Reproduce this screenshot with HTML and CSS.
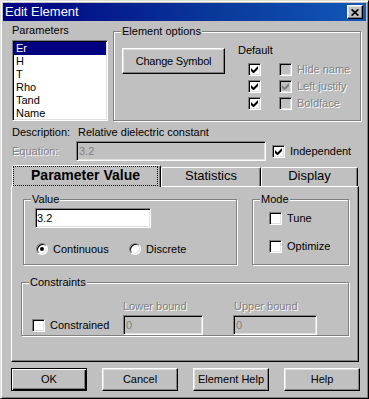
FILE: index.html
```html
<!DOCTYPE html>
<html lang="en">
<head>
<meta charset="utf-8">
<title>Edit Element</title>
<link rel="stylesheet" href="styles.css">
</head>
<body>
<svg class="defs" width="0" height="0" aria-hidden="true">
  <symbol id="chk" viewBox="0 0 7 7"><path d="M0 2 L2.5 4.5 L7 0 V3 L2.5 7.5 L0 5 Z"/></symbol>
</svg>
<div class="window">
  <div class="titlebar">
    <span class="title">Edit Element</span>
    <span class="close-btn"><svg width="8" height="7" viewBox="0 0 8 7"><path d="M0.6 0.4 L7.4 6.6 M7.4 0.4 L0.6 6.6" stroke="#000" stroke-width="1.7"/></svg></span>
  </div>
  <div class="content">
    <div class="top-row">
      <div class="params">
        <div class="lbl">Parameters</div>
        <ul class="listbox">
          <li class="sel">Er</li>
          <li>H</li>
          <li>T</li>
          <li>Rho</li>
          <li>Tand</li>
          <li>Name</li>
        </ul>
      </div>
      <div class="group options">
        <span class="legend">Element options</span>
        <button class="btn change">Change Symbol</button>
        <div class="defaults">
          <div class="default-lbl">Default</div>
          <div class="def-rows">
            <div class="def-row">
              <span class="cb"><svg class="chk" width="7" height="7"><use href="#chk"/></svg></span>
              <span class="cb dis second"></span>
              <span class="cb-lbl dis-text">Hide name</span>
            </div>
            <div class="def-row">
              <span class="cb"><svg class="chk" width="7" height="7"><use href="#chk"/></svg></span>
              <span class="cb dis second"><svg class="chk grey" width="7" height="7"><use href="#chk"/></svg></span>
              <span class="cb-lbl dis-text">Left justify</span>
            </div>
            <div class="def-row">
              <span class="cb"><svg class="chk" width="7" height="7"><use href="#chk"/></svg></span>
              <span class="cb dis second"></span>
              <span class="cb-lbl dis-text">Boldface</span>
            </div>
          </div>
        </div>
      </div>
    </div>

    <div class="desc-row">
      <span class="field-lbl">Description:</span>
      <span class="desc">Relative dielectric constant</span>
    </div>

    <div class="eq-row">
      <span class="field-lbl dis-text">Equation:</span>
      <div class="textbox dis eq">3.2</div>
      <div class="check-item indep">
        <span class="cb"><svg class="chk" width="7" height="7"><use href="#chk"/></svg></span>
        <span class="cb-lbl">Independent</span>
      </div>
    </div>

    <div class="tabs">
      <div class="tab active"><span class="focus">Parameter Value</span></div>
      <div class="tab stats">Statistics</div>
      <div class="tab display">Display</div>
    </div>

    <div class="panel">
      <div class="prow">
        <div class="group value-grp">
          <span class="legend">Value</span>
          <div class="textbox val">3.2</div>
          <div class="radio-row">
            <div class="radio-item first">
              <span class="radio"><span class="dot"></span></span>
              <span class="cb-lbl">Continuous</span>
            </div>
            <div class="radio-item">
              <span class="radio"></span>
              <span class="cb-lbl">Discrete</span>
            </div>
          </div>
        </div>
        <div class="group mode-grp">
          <span class="legend">Mode</span>
          <div class="check-item">
            <span class="cb"></span>
            <span class="cb-lbl">Tune</span>
          </div>
          <div class="check-item">
            <span class="cb"></span>
            <span class="cb-lbl">Optimize</span>
          </div>
        </div>
      </div>
      <div class="group constr-grp">
        <span class="legend">Constraints</span>
        <div class="check-item c-item">
          <span class="cb"></span>
          <span class="cb-lbl">Constrained</span>
        </div>
        <div class="bound">
          <span class="dis-text">Lower bound</span>
          <div class="textbox dis lower">0</div>
        </div>
        <div class="bound upper-col">
          <span class="dis-text bound-lbl">Upper bound</span>
          <div class="textbox dis upper">0</div>
        </div>
      </div>
    </div>

    <div class="buttons">
      <button class="btn default">OK</button>
      <button class="btn">Cancel</button>
      <button class="btn">Element Help</button>
      <button class="btn">Help</button>
    </div>
  </div>
</div>
</body>
</html>
```
FILE: styles.css
```css
* { box-sizing: border-box; }
html, body { margin: 0; padding: 0; }
body {
  background: #c0c0c0;
  font-family: "Liberation Sans", Arial, sans-serif;
  font-size: 11px;
  line-height: 13px;
  color: #000;
}
.defs { position: absolute; width: 0; height: 0; overflow: hidden; }

.window {
  width: 369px;
  height: 399px;
  background: #c0c0c0;
  border: 1px solid;
  border-color: #dfdfdf #000 #000 #dfdfdf;
  box-shadow: inset 1px 1px #fff, inset -1px -1px #808080;
  padding: 2px;
}

.titlebar {
  height: 18px;
  display: flex;
  align-items: center;
  justify-content: space-between;
  background: linear-gradient(90deg, #000080 0%, #0a3a9c 60%, #1058b8 100%);
  padding: 0 3px 0 2px;
}
.title {
  color: #fff;
  font-size: 13px;
  line-height: 18px;
}
.close-btn {
  width: 16px;
  height: 14px;
  background: #c0c0c0;
  border: 1px solid;
  border-color: #fff #000 #000 #fff;
  box-shadow: inset -1px -1px #808080, inset 1px 1px #dfdfdf;
  display: flex;
  align-items: center;
  justify-content: center;
}

.content { padding: 3px 0 0 9px; }

/* top area */
.top-row { display: flex; height: 98px; }
.params { width: 96px; flex: none; }
.lbl { height: 13px; }
.listbox {
  list-style: none;
  margin: 3px 0 0;
  padding: 1px;
  height: 81px;
  background: #fff;
  border: 1px solid;
  border-color: #808080 #fff #fff #808080;
  box-shadow: inset 1px 1px #000, inset -1px -1px #dfdfdf;
}
.listbox li { height: 13px; padding-left: 2px; }
.listbox li.sel { background: #000080; color: #fff; }

.group {
  position: relative;
  border: 1px solid #808080;
  box-shadow: inset 1px 1px #fff, 1px 1px #fff;
  flex: none;
}
.legend {
  position: absolute;
  top: -7px;
  left: 7px;
  background: #c0c0c0;
  padding: 0 1px;
  line-height: 13px;
  white-space: nowrap;
}

.options {
  width: 248px;
  height: 90px;
  margin: 7px 0 0 5px;
  padding: 16px 0 0 8px;
  display: flex;
  align-items: flex-start;
}

.btn {
  font: inherit;
  color: #000;
  background: #c0c0c0;
  border: 1px solid;
  border-color: #fff #000 #000 #fff;
  box-shadow: inset -1px -1px #808080, inset 1px 1px #dfdfdf;
  padding: 0;
  border-radius: 0;
}
.change { width: 103px; height: 26px; flex: none; letter-spacing: -0.2px; }

.defaults { margin: -4px 0 0 13px; }
.default-lbl { height: 13px; }
.def-rows {
  display: flex;
  flex-direction: column;
  gap: 4px;
  margin-top: 6px;
}
.def-row {
  display: flex;
  align-items: center;
  height: 13px;
  padding-left: 10px;
}
.def-row .second { margin-left: 18px; }

.cb {
  width: 13px;
  height: 13px;
  flex: none;
  background: #fff;
  border: 1px solid;
  border-color: #808080 #fff #fff #808080;
  box-shadow: inset 1px 1px #000, inset -1px -1px #dfdfdf;
  display: flex;
  align-items: center;
  justify-content: center;
}
.cb.dis { background: #c0c0c0; }
.chk { fill: #000; display: block; }
.chk.grey { fill: #808080; }
.cb-lbl { margin-left: 5px; white-space: nowrap; }

.dis-text { color: #808080; text-shadow: 1px 1px 0 #fff; }

/* description / equation */
.desc-row { display: flex; height: 13px; margin-top: 4px; }
.field-lbl { width: 64px; flex: none; }
.desc { padding-left: 2px; }

.eq-row {
  display: flex;
  align-items: center;
  height: 20px;
  margin-top: 2px;
}
.textbox {
  height: 20px;
  flex: none;
  background: #fff;
  border: 1px solid;
  border-color: #808080 #fff #fff #808080;
  box-shadow: inset 1px 1px #000, inset -1px -1px #dfdfdf;
  padding: 0 0 0 2px;
  line-height: 18px;
}
.textbox.dis { background: #c0c0c0; color: #808080; }
.eq { width: 190px; }
.check-item { display: flex; align-items: center; }
.indep { margin-left: 6px; }

/* tabs */
.tabs {
  display: flex;
  align-items: flex-end;
  height: 21px;
  margin-top: 4px;
}
.tab {
  flex: none;
  background: #c0c0c0;
  border: 1px solid;
  border-bottom: none;
  border-color: #fff #000 transparent #fff;
  border-radius: 2px 2px 0 0;
  box-shadow: inset -1px 0 #808080;
  text-align: center;
  font-size: 13px;
  line-height: 16px;
}
.tab.active {
  width: 149px;
  height: 22px;
  margin-bottom: -1px;
  padding: 0 2px 1px 0;
  position: relative;
  z-index: 1;
  font-size: 14px;
  font-weight: bold;
}
.focus {
  display: block;
  height: 100%;
  border: 1px dotted #000;
  line-height: 16px;
}
.stats { width: 100px; height: 19px; }
.display { width: 97px; height: 19px; }

.panel {
  width: 348px;
  height: 176px;
  margin-left: -1px;
  border: 1px solid;
  border-color: #fff #000 #000 #fff;
  box-shadow: inset -1px -1px #808080;
  padding: 12px 0 0 9px;
}
.prow { display: flex; }
.value-grp {
  width: 214px;
  height: 66px;
  margin-left: 2px;
  padding: 8px 0 0 11px;
}
.val { width: 116px; padding-left: 1px; }
.radio-row {
  display: flex;
  align-items: center;
  height: 12px;
  margin-top: 15px;
  padding-left: 1px;
}
.radio-item { display: flex; align-items: center; }
.radio-item.first { width: 93px; }
.radio {
  width: 12px;
  height: 12px;
  flex: none;
  border-radius: 50%;
  background: #fff;
  border: 1px solid;
  border-color: #808080 #fff #fff #808080;
  box-shadow: inset 1px 1px #000, inset -1px -1px #dfdfdf;
  display: flex;
  align-items: center;
  justify-content: center;
}
.dot {
  width: 4px;
  height: 4px;
  border-radius: 50%;
  background: #000;
}

.mode-grp {
  width: 97px;
  height: 66px;
  margin-left: 15px;
  padding: 12px 0 0 16px;
  display: flex;
  flex-direction: column;
  gap: 15px;
}

.constr-grp {
  width: 328px;
  height: 54px;
  margin-top: 17px;
  padding: 9px 0 0 10px;
  display: flex;
  align-items: flex-end;
}
.c-item { width: 91px; height: 20px; flex: none; }
.bound { display: flex; flex-direction: column; }
.bound .textbox { margin-top: 2px; }
.lower { width: 80px; }
.upper-col { margin-left: 30px; }
.bound-lbl { padding-left: 1px; }
.upper { width: 84px; }

/* bottom buttons */
.buttons {
  display: flex;
  justify-content: space-between;
  width: 349px;
  margin: 6px 0 0 -1px;
}
.buttons .btn { width: 76px; height: 23px; }
.btn.default {
  border-color: #000;
  box-shadow: inset 1px 1px #fff, inset -1px -1px #000, inset -2px -2px #808080;
}
```
